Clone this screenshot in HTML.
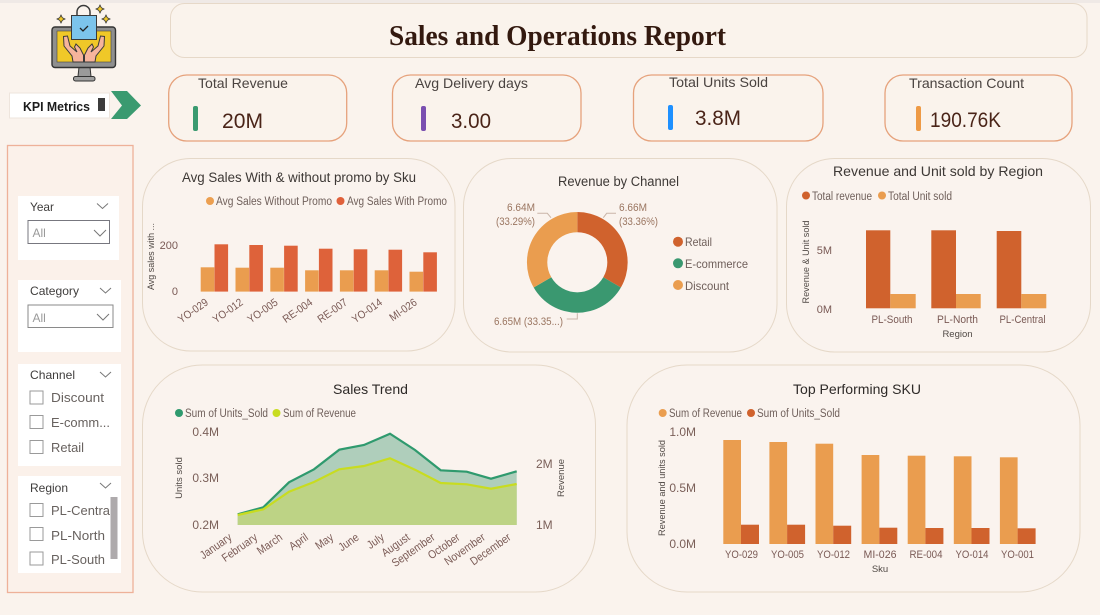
<!DOCTYPE html>
<html lang="en">
<head>
<meta charset="utf-8">
<title>Sales and Operations Report</title>
<style>
html,body{margin:0;padding:0;width:1100px;height:615px;overflow:hidden;background:#faf3ed}
svg{display:block;filter:blur(.35px)}
text{font-family:"Liberation Sans",sans-serif}
.t{font-size:14px;fill:#3d3835}
.l{font-size:11.5px;fill:#6f5f5a}
.a{font-size:11px;fill:#7a5a55}
.v{font-size:12px;fill:#7a5f58}
.r{font-size:9.5px;fill:#514a46}
.k{font-size:14px;fill:#4a4340}
.n{font-size:21px;fill:#4a2418}
.s{font-size:12px;fill:#3f3d3c}
.o{font-size:13px;fill:#68625f}
.d{font-size:11px;fill:#9a7560}
.card{fill:#faf3ee;stroke:#e5d8c8;stroke-width:1}
.kpi{fill:#faf3ec;stroke:#e6a27c;stroke-width:1.3}
.cb{fill:#fff;stroke:#9a9a9a;stroke-width:1}
.ch{fill:none;stroke:#777;stroke-width:1}
</style>
</head>
<body>
<svg width="1100" height="615" viewBox="0 0 1100 615" xmlns="http://www.w3.org/2000/svg">
<rect width="1100" height="615" fill="#faf3ed"/>
<rect width="1100" height="3" fill="#efe9e6"/>

<!-- logo -->
<g>
<path d="M77 16V12a6.500 6.500 0 0 1 13 0V16" fill="none" stroke="#3a3a3a" stroke-width="1.500"/>
<path d="M79 67h11l1 9.500h-13z" fill="#9a9a9a" stroke="#333" stroke-width="1"/>
<rect x="73.500" y="76.500" width="21.500" height="4.500" rx="2" fill="#a0a0a0" stroke="#333"/>
<rect x="52" y="27" width="63.500" height="40.500" rx="3" fill="#8f8f8f" stroke="#333" stroke-width="1.400"/>
<rect x="57" y="31" width="54" height="31" fill="#f0c828" stroke="#444" stroke-width=".6"/>
<path d="M83.500 62V55L80 48L76 44L74.500 47L77 52L70 46L67.500 36L63.500 36.500L64 46L72 56L73 62Z" fill="#f6b49c" stroke="#3a3a3a" stroke-width="1"/>
<path d="M84.500 62V55L88 48L92 44L93.500 47L91 52L98 46L100.500 36L104.500 36.500L104 46L96 56L95 62Z" fill="#f6b49c" stroke="#3a3a3a" stroke-width="1"/>
<rect x="71.500" y="15.500" width="25" height="24" fill="#7cc4ec" stroke="#3a3a3a" stroke-width="1"/>
<path d="M80 28l3 3 5-5" fill="none" stroke="#222" stroke-width="1.300"/>
<path d="M61 15l1.300 2.700L65 19l-2.700 1.300L61 23l-1.300-2.700L57 19l2.700-1.300z" fill="#f0c828" stroke="#333" stroke-width=".8"/>
<path d="M100 5l1.300 2.700L104 9l-2.700 1.300L100 13l-1.300-2.700L96 9l2.700-1.300z" fill="#f0c828" stroke="#333" stroke-width=".8"/>
<path d="M106 15l1.300 2.700L110 19l-2.700 1.300L106 23l-1.300-2.700L102 19l2.700-1.300z" fill="#f0c828" stroke="#333" stroke-width=".8"/>
</g>

<!-- title -->
<rect x="170.500" y="3.500" width="916.500" height="54" rx="14" fill="#faf3ec" stroke="#e6d8c8"/>
<text x="389" y="45" textLength="337" lengthAdjust="spacingAndGlyphs" style="font-family:'Liberation Serif',serif;font-weight:bold;font-size:28px;fill:#33190f">Sales and Operations Report</text>

<!-- KPI Metrics tag -->
<rect x="9.500" y="93" width="100" height="25" fill="#fff" stroke="#eee5dd"/>
<text x="23" y="111" textLength="67" lengthAdjust="spacingAndGlyphs" style="font-size:13px;font-weight:bold;fill:#1c1c1c">KPI Metrics</text>
<rect x="98" y="98" width="7" height="13" fill="#3c3c3c"/>
<path d="M111 91H127L141 105.500L127 119H111L122 105.500Z" fill="#3a9a70"/>

<!-- KPI cards -->
<rect x="168.700" y="75" width="178" height="66" rx="18" class="kpi"/>
<text x="198" y="88" textLength="90" lengthAdjust="spacingAndGlyphs" class="k">Total Revenue</text>
<rect x="193" y="106" width="5" height="25" rx="2" fill="#3a9a70"/>
<text x="222" y="128" textLength="41" lengthAdjust="spacingAndGlyphs" class="n">20M</text>

<rect x="392.500" y="75" width="188.500" height="66" rx="18" class="kpi"/>
<text x="415" y="88" textLength="113" lengthAdjust="spacingAndGlyphs" class="k">Avg Delivery days</text>
<rect x="421" y="106" width="5" height="25" rx="2" fill="#7a4fb0"/>
<text x="451" y="128" textLength="40" lengthAdjust="spacingAndGlyphs" class="n">3.00</text>

<rect x="633.500" y="75" width="189.500" height="66" rx="18" class="kpi"/>
<text x="669" y="87" textLength="99" lengthAdjust="spacingAndGlyphs" class="k">Total Units Sold</text>
<rect x="668" y="105" width="5" height="25" rx="2" fill="#1e90ff"/>
<text x="695" y="125" textLength="46" lengthAdjust="spacingAndGlyphs" class="n">3.8M</text>

<rect x="885" y="75" width="187" height="66" rx="18" class="kpi"/>
<text x="909" y="88" textLength="115" lengthAdjust="spacingAndGlyphs" class="k">Transaction Count</text>
<rect x="916" y="106" width="5" height="25" rx="2" fill="#ee9a45"/>
<text x="930" y="127" textLength="71" lengthAdjust="spacingAndGlyphs" class="n">190.76K</text>

<!-- slicer panel -->
<rect x="7.500" y="145.500" width="125.500" height="447" fill="#fbf1ea" stroke="#eeb199" stroke-width="1.300"/>

<rect x="18" y="196" width="101" height="64" fill="#fff"/>
<text x="30" y="211" class="s" textLength="24" lengthAdjust="spacingAndGlyphs">Year</text>
<path d="M97 203.500l5.500 5 5.500-5" class="ch"/>
<rect x="28" y="220.500" width="81.500" height="23" fill="#fff" stroke="#77777f"/>
<text x="32.500" y="237" style="font-size:12px;fill:#9a9a9a">All</text>
<path d="M94 230l6 6 6-6" class="ch"/>

<rect x="18" y="280" width="103" height="72" fill="#fff"/>
<text x="30" y="295" class="s" textLength="49" lengthAdjust="spacingAndGlyphs">Category</text>
<path d="M100 288l5.500 5 5.500-5" class="ch"/>
<rect x="28" y="305" width="85" height="22.500" fill="#fff" stroke="#8a8a8a"/>
<text x="32.500" y="322" style="font-size:12px;fill:#9a9a9a">All</text>
<path d="M97 314l6 6 6-6" class="ch"/>

<rect x="18" y="364" width="103" height="102" fill="#fff"/>
<text x="30" y="379" class="s" textLength="45" lengthAdjust="spacingAndGlyphs">Channel</text>
<path d="M100 372l5.500 5 5.500-5" class="ch"/>
<rect x="30" y="391" width="13" height="13" class="cb"/>
<text x="51" y="402" class="o" textLength="53" lengthAdjust="spacingAndGlyphs">Discount</text>
<rect x="30" y="415.500" width="13" height="13" class="cb"/>
<text x="51" y="427" class="o" textLength="59" lengthAdjust="spacingAndGlyphs">E-comm...</text>
<rect x="30" y="440.500" width="13" height="13" class="cb"/>
<text x="51" y="452" class="o" textLength="33" lengthAdjust="spacingAndGlyphs">Retail</text>

<rect x="18" y="476" width="103" height="97" fill="#fff"/>
<text x="30" y="492" class="s" textLength="38" lengthAdjust="spacingAndGlyphs">Region</text>
<path d="M100 483l5.500 5 5.500-5" class="ch"/>
<rect x="30" y="503.500" width="13" height="13" class="cb"/>
<text x="51" y="515" class="o" textLength="59" lengthAdjust="spacingAndGlyphs">PL-Centra</text>
<rect x="30" y="527.500" width="13" height="13" class="cb"/>
<text x="51" y="540" class="o" textLength="54" lengthAdjust="spacingAndGlyphs">PL-North</text>
<rect x="30" y="552" width="13" height="13" class="cb"/>
<text x="51" y="564" class="o" textLength="54" lengthAdjust="spacingAndGlyphs">PL-South</text>
<rect x="110.500" y="497" width="7" height="62" fill="#aeaaac"/>

<!-- card 1 -->
<rect x="142.500" y="158.500" width="312.500" height="192.500" rx="48" class="card"/>
<text x="182" y="182" textLength="234" lengthAdjust="spacingAndGlyphs" class="t" style="font-size:13.500px">Avg Sales With &amp; without promo by Sku</text>
<circle cx="210" cy="201" r="4" fill="#ec9f50"/>
<text x="216" y="205" textLength="116" lengthAdjust="spacingAndGlyphs" class="l">Avg Sales Without Promo</text>
<circle cx="340.500" cy="201" r="4" fill="#e0603a"/>
<text x="347" y="205" textLength="100" lengthAdjust="spacingAndGlyphs" class="l">Avg Sales With Promo</text>
<text x="178" y="249" text-anchor="end" class="a">200</text>
<text x="178" y="295" text-anchor="end" class="a">0</text>
<text transform="translate(154,256.500) rotate(-90)" text-anchor="middle" style="font-size:9px;fill:#514a46" textLength="67" lengthAdjust="spacingAndGlyphs">Avg sales with ...</text>
<g fill="#ea9d4f">
<rect x="200.700" y="267.300" width="13.600" height="24.300"/>
<rect x="235.500" y="267.700" width="13.600" height="23.900"/>
<rect x="270.300" y="267.700" width="13.600" height="23.900"/>
<rect x="305.100" y="270.300" width="13.600" height="21.300"/>
<rect x="339.900" y="270.300" width="13.600" height="21.300"/>
<rect x="374.700" y="270.300" width="13.600" height="21.300"/>
<rect x="409.500" y="271.700" width="13.600" height="19.900"/>
</g>
<g fill="#de623a">
<rect x="214.500" y="244.300" width="13.600" height="47.300"/>
<rect x="249.300" y="245" width="13.600" height="46.600"/>
<rect x="284.100" y="245.700" width="13.600" height="45.900"/>
<rect x="318.900" y="248.700" width="13.600" height="42.900"/>
<rect x="353.700" y="249.300" width="13.600" height="42.300"/>
<rect x="388.500" y="249.700" width="13.600" height="41.900"/>
<rect x="423.300" y="252.300" width="13.600" height="39.300"/>
</g>
<g text-anchor="end">
<text class="a" transform="translate(209,304) rotate(-35) scale(.9,1)">YO-029</text>
<text class="a" transform="translate(243.800,304) rotate(-35) scale(.9,1)">YO-012</text>
<text class="a" transform="translate(278.600,304) rotate(-35) scale(.9,1)">YO-005</text>
<text class="a" transform="translate(313.400,304) rotate(-35) scale(.9,1)">RE-004</text>
<text class="a" transform="translate(348.200,304) rotate(-35) scale(.9,1)">RE-007</text>
<text class="a" transform="translate(383,304) rotate(-35) scale(.9,1)">YO-014</text>
<text class="a" transform="translate(417.800,304) rotate(-35) scale(.9,1)">MI-026</text>
</g>

<!-- card 2 -->
<rect x="463.500" y="158.500" width="313.500" height="193.500" rx="48" class="card"/>
<text x="558" y="186" textLength="121" lengthAdjust="spacingAndGlyphs" class="t" style="font-size:13.500px">Revenue by Channel</text>
<path d="M577.300 212A50.300 50.300 0 0 1 620.900 287.500L603.300 277.300A30 30 0 0 0 577.300 232.300Z" fill="#d0622d"/>
<path d="M620.900 287.500A50.300 50.300 0 0 1 533.700 287.500L551.300 277.300A30 30 0 0 0 603.300 277.300Z" fill="#3a9870"/>
<path d="M533.700 287.500A50.300 50.300 0 0 1 577.300 212L577.300 232.300A30 30 0 0 0 551.300 277.300Z" fill="#ea9d4f"/>
<g fill="none" stroke="#c9b5a8" stroke-width="1">
<path d="M603.300 217.700L606.700 213.300H616"/>
<path d="M551 217.700L547.300 213.300H537.300"/>
<path d="M577.300 313.300V319H566.700"/>
</g>
<text x="619" y="211" class="d" textLength="28" lengthAdjust="spacingAndGlyphs">6.66M</text>
<text x="619" y="225" class="d" textLength="39" lengthAdjust="spacingAndGlyphs">(33.36%)</text>
<text x="507" y="211" class="d" textLength="28" lengthAdjust="spacingAndGlyphs">6.64M</text>
<text x="496" y="225" class="d" textLength="39" lengthAdjust="spacingAndGlyphs">(33.29%)</text>
<text x="494" y="325" class="d" textLength="69" lengthAdjust="spacingAndGlyphs">6.65M (33.35...)</text>
<circle cx="678" cy="241.700" r="5" fill="#d0622d"/>
<text x="685" y="246" style="font-size:12px;fill:#6f5f5a" textLength="27" lengthAdjust="spacingAndGlyphs">Retail</text>
<circle cx="678" cy="263.300" r="5" fill="#3a9870"/>
<text x="685" y="268" style="font-size:12px;fill:#6f5f5a" textLength="63" lengthAdjust="spacingAndGlyphs">E-commerce</text>
<circle cx="678" cy="285" r="5" fill="#ea9d4f"/>
<text x="685" y="290" style="font-size:12px;fill:#6f5f5a" textLength="44" lengthAdjust="spacingAndGlyphs">Discount</text>

<!-- card 3 -->
<rect x="786.500" y="158.500" width="304" height="193.500" rx="48" class="card"/>
<text x="833" y="176" textLength="210" lengthAdjust="spacingAndGlyphs" class="t">Revenue and Unit sold by Region</text>
<circle cx="806" cy="195.500" r="4" fill="#d0622d"/>
<text x="812" y="200" textLength="60" lengthAdjust="spacingAndGlyphs" class="l">Total revenue</text>
<circle cx="882" cy="195.500" r="4" fill="#ea9d4f"/>
<text x="888" y="200" textLength="64" lengthAdjust="spacingAndGlyphs" class="l">Total Unit sold</text>
<text x="832" y="254" text-anchor="end" class="a">5M</text>
<text x="832" y="313" text-anchor="end" class="a">0M</text>
<text transform="translate(809,262) rotate(-90)" text-anchor="middle" class="r" textLength="83" lengthAdjust="spacingAndGlyphs">Revenue &amp; Unit sold</text>
<g fill="#d0622d">
<rect x="866" y="230.300" width="24.300" height="78"/>
<rect x="931.300" y="230.300" width="24.700" height="78"/>
<rect x="996.700" y="231" width="24.600" height="77.300"/>
</g>
<g fill="#ea9d4f">
<rect x="890.300" y="294" width="25.400" height="14.300"/>
<rect x="956" y="294" width="24.700" height="14.300"/>
<rect x="1021.300" y="294" width="25" height="14.300"/>
</g>
<text x="871.500" y="323" class="a" textLength="41" lengthAdjust="spacingAndGlyphs">PL-South</text>
<text x="937" y="323" class="a" textLength="41" lengthAdjust="spacingAndGlyphs">PL-North</text>
<text x="999.500" y="323" class="a" textLength="46" lengthAdjust="spacingAndGlyphs">PL-Central</text>
<text x="957.500" y="337" text-anchor="middle" class="r">Region</text>

<!-- card 4 -->
<rect x="142.500" y="365" width="453" height="227" rx="60" class="card"/>
<text x="333" y="394" textLength="75" lengthAdjust="spacingAndGlyphs" class="t" style="fill:#2e2a28">Sales Trend</text>
<circle cx="179" cy="413" r="4" fill="#2f9a6e"/>
<text x="185" y="417" textLength="83" lengthAdjust="spacingAndGlyphs" class="l">Sum of Units_Sold</text>
<circle cx="276.500" cy="413" r="4" fill="#c8dc20"/>
<text x="283" y="417" textLength="73" lengthAdjust="spacingAndGlyphs" class="l">Sum of Revenue</text>
<text x="219" y="436" text-anchor="end" class="v">0.4M</text>
<text x="219" y="482" text-anchor="end" class="v">0.3M</text>
<text x="219" y="529" text-anchor="end" class="v">0.2M</text>
<text x="536" y="468" class="v">2M</text>
<text x="536" y="529" class="v">1M</text>
<text transform="translate(182,478) rotate(-90)" text-anchor="middle" class="r">Units sold</text>
<text transform="translate(564,478) rotate(-90)" text-anchor="middle" class="r">Revenue</text>
<path d="M237.700 514.300L263.300 507.300L289 482.300L314 469.300L339.300 449.700L364 445L390 433.700L415 450L440.700 470.300L466.700 471.700L491 478.700L516.700 471.300V525H237.700Z" fill="#afcebb"/>
<path d="M237.700 515L263.300 509.300L289 491.700L314 482L339.300 469.300L364 466L390 458.300L415 469.700L440.700 483L466.700 484.300L491 488.700L516.700 484V525H237.700Z" fill="#bdd385"/>
<path d="M237.700 514.300L263.300 507.300L289 482.300L314 469.300L339.300 449.700L364 445L390 433.700L415 450L440.700 470.300L466.700 471.700L491 478.700L516.700 471.300" fill="none" stroke="#2f9a6e" stroke-width="2.200"/>
<path d="M237.700 515L263.300 509.300L289 491.700L314 482L339.300 469.300L364 466L390 458.300L415 469.700L440.700 483L466.700 484.300L491 488.700L516.700 484" fill="none" stroke="#c8dc20" stroke-width="2.200"/>
<g text-anchor="end">
<text class="a" transform="translate(232.700,539) rotate(-35) scale(.88,1)" style="font-size:11.500px">January</text>
<text class="a" transform="translate(258.300,539) rotate(-35) scale(.88,1)" style="font-size:11.500px">February</text>
<text class="a" transform="translate(283.300,539) rotate(-35) scale(.88,1)" style="font-size:11.500px">March</text>
<text class="a" transform="translate(309,539) rotate(-35) scale(.88,1)" style="font-size:11.500px">April</text>
<text class="a" transform="translate(334.300,539) rotate(-35) scale(.88,1)" style="font-size:11.500px">May</text>
<text class="a" transform="translate(359.700,539) rotate(-35) scale(.88,1)" style="font-size:11.500px">June</text>
<text class="a" transform="translate(385,539) rotate(-35) scale(.88,1)" style="font-size:11.500px">July</text>
<text class="a" transform="translate(410.700,539) rotate(-35) scale(.88,1)" style="font-size:11.500px">August</text>
<text class="a" transform="translate(435.700,539) rotate(-35) scale(.88,1)" style="font-size:11.500px">September</text>
<text class="a" transform="translate(460.700,539) rotate(-35) scale(.88,1)" style="font-size:11.500px">October</text>
<text class="a" transform="translate(486,539) rotate(-35) scale(.88,1)" style="font-size:11.500px">November</text>
<text class="a" transform="translate(511.700,539) rotate(-35) scale(.88,1)" style="font-size:11.500px">December</text>
</g>

<!-- card 5 -->
<rect x="627" y="365" width="453" height="227" rx="60" class="card"/>
<text x="793" y="394" textLength="128" lengthAdjust="spacingAndGlyphs" class="t" style="fill:#2e2a28">Top Performing SKU</text>
<circle cx="662.700" cy="413" r="4" fill="#ea9d4f"/>
<text x="669" y="417" textLength="73" lengthAdjust="spacingAndGlyphs" class="l">Sum of Revenue</text>
<circle cx="751" cy="413" r="4" fill="#d0622d"/>
<text x="757" y="417" textLength="83" lengthAdjust="spacingAndGlyphs" class="l">Sum of Units_Sold</text>
<text x="696" y="436" text-anchor="end" class="v">1.0M</text>
<text x="696" y="492" text-anchor="end" class="v">0.5M</text>
<text x="696" y="548" text-anchor="end" class="v">0.0M</text>
<text transform="translate(665,488) rotate(-90)" text-anchor="middle" class="r" textLength="96" lengthAdjust="spacingAndGlyphs">Revenue and units sold</text>
<g fill="#ea9d4f">
<rect x="723.300" y="440" width="17.700" height="104"/>
<rect x="769.400" y="442" width="17.700" height="102"/>
<rect x="815.500" y="443.700" width="17.700" height="100.300"/>
<rect x="861.600" y="455" width="17.700" height="89"/>
<rect x="907.700" y="455.700" width="17.700" height="88.300"/>
<rect x="953.800" y="456.300" width="17.700" height="87.700"/>
<rect x="999.900" y="457.300" width="17.700" height="86.700"/>
</g>
<g fill="#d0622d">
<rect x="741" y="524.700" width="18" height="19.300"/>
<rect x="787.100" y="524.700" width="18" height="19.300"/>
<rect x="833.200" y="525.700" width="18" height="18.300"/>
<rect x="879.300" y="527.700" width="18" height="16.300"/>
<rect x="925.400" y="528" width="18" height="16"/>
<rect x="971.500" y="528" width="18" height="16"/>
<rect x="1017.600" y="528.300" width="18" height="15.700"/>
</g>
<text x="725" y="558" class="a" textLength="33" lengthAdjust="spacingAndGlyphs">YO-029</text>
<text x="771" y="558" class="a" textLength="33" lengthAdjust="spacingAndGlyphs">YO-005</text>
<text x="817" y="558" class="a" textLength="33" lengthAdjust="spacingAndGlyphs">YO-012</text>
<text x="863.500" y="558" class="a" textLength="33" lengthAdjust="spacingAndGlyphs">MI-026</text>
<text x="909.500" y="558" class="a" textLength="33" lengthAdjust="spacingAndGlyphs">RE-004</text>
<text x="955.500" y="558" class="a" textLength="33" lengthAdjust="spacingAndGlyphs">YO-014</text>
<text x="1001" y="558" class="a" textLength="33" lengthAdjust="spacingAndGlyphs">YO-001</text>
<text x="880" y="572" text-anchor="middle" class="r">Sku</text>
</svg>
</body>
</html>
